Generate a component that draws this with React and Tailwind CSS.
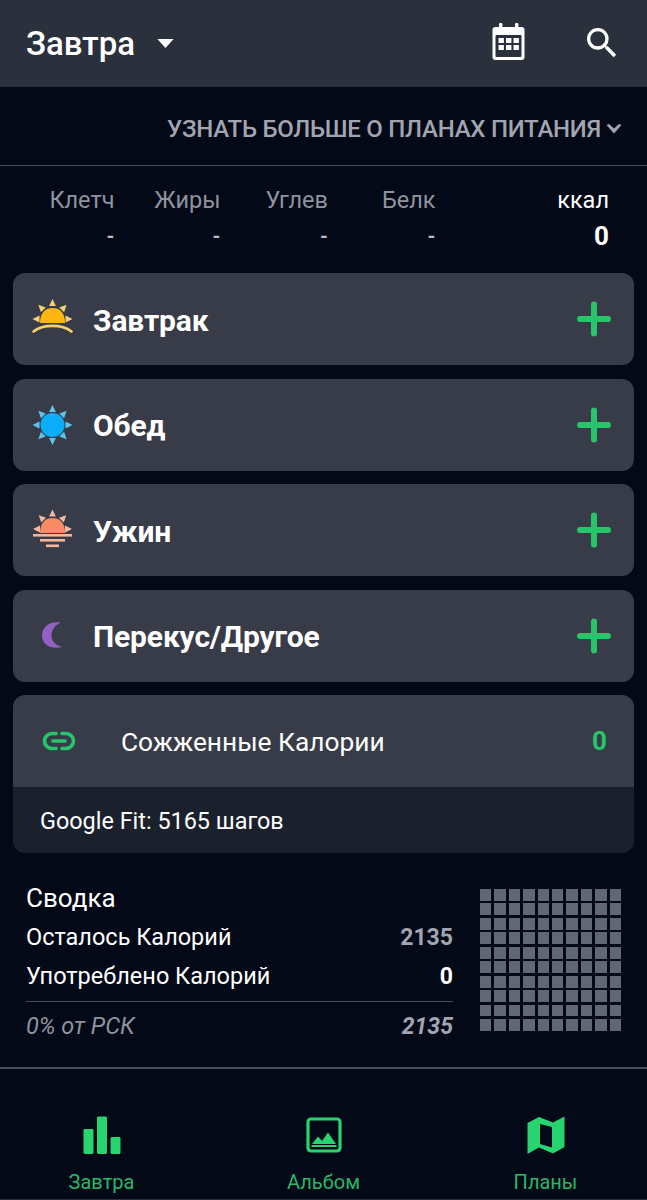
import React from 'react';

const Rays = ({ color, cx = 21, cy = 21, r = 19, angles }) => (
  <>
    {angles.map((a) => (
      <polygon
        key={a}
        points={`${cx - 3.4},${cy - r + 6} ${cx},${cy - r - 1} ${cx + 3.4},${cy - r + 6}`}
        fill={color}
        transform={`rotate(${a} ${cx} ${cy})`}
      />
    ))}
  </>
);

const BreakfastIcon = () => (
  <svg width="42" height="42" viewBox="0 0 42 42">
    <Rays color="#f3d27a" cx={20.5} cy={21} r={19} angles={[-90, -45, 0, 45, 90]} />
    <path d="M8 25 C8 14 14 10 20.5 10 C27 10 33 14 33 25 Z" fill="#ffb70f" />
    <path d="M1.5 33.5 C11 26 30 26 39.5 33.5" fill="none" stroke="#f6cf6c" strokeWidth="2.6" strokeLinecap="round" />
  </svg>
);

const LunchIcon = () => (
  <svg width="42" height="42" viewBox="0 0 42 42">
    <Rays color="#5fc3ea" cx={20.5} cy={21} r={19} angles={[0, 45, 90, 135, 180, 225, 270, 315]} />
    <circle cx="20.5" cy="21" r="12" fill="#0cadf8" />
  </svg>
);

const DinnerIcon = () => (
  <svg width="42" height="42" viewBox="0 0 42 42">
    <Rays color="#f2b9a1" cx={20.5} cy={20} r={18.5} angles={[-90, -45, 45, 90, 0]} />
    <path d="M8 24 C8 13 14 9 20.5 9 C27 9 33 13 33 24 Z" fill="#fb8c62" />
    <rect x="1" y="25" width="39" height="2.6" fill="#f5b59c" />
    <rect x="8" y="30" width="25" height="2.6" fill="#f5b59c" />
    <rect x="14" y="35.5" width="13" height="2.6" fill="#f5b59c" />
  </svg>
);

const SnackIcon = () => (
  <svg width="42" height="42" viewBox="0 0 42 42">
    <path d="M29 7.5 C17 5.5 10 12.5 10 20.5 C10 28.5 17 35 30.5 32 C23 30 19.5 26 19.5 20.5 C19.5 15 23 10 29 7.5 Z" fill="#9361c4" />
  </svg>
);

const Plus = () => (
  <svg width="34" height="36" viewBox="0 0 34 36" className="block">
    <path d="M17 3.5 V32.5 M3 18 H31" stroke="#27c66b" strokeWidth="6" strokeLinecap="round" />
  </svg>
);

const MealCard = ({ icon, label }) => (
  <div className="h-[92px] rounded-xl bg-[#383c48] flex items-center pl-[19px] pr-[23px]">
    <div className="w-[42px] h-[42px] shrink-0">{icon}</div>
    <span className="ml-[19px] pt-[3px] text-[30px] tracking-[-0.15px] font-bold text-white leading-none flex-1">{label}</span>
    <Plus />
  </div>
);

const MacroCol = ({ label, width }) => (
  <div className={`${width} flex flex-col items-end`}>
    <span className="text-[23.5px] leading-[28px] text-[#8f939e]">{label}</span>
    <span className="text-[20px] leading-[28px] mt-[8px] text-[#b9bcc5] font-bold">-</span>
  </div>
);

const SummaryRow = ({ label, value, valueClass }) => (
  <div className="flex items-center justify-between h-[39px] pt-[2px]">
    <span className="text-[23.5px] text-white leading-none">{label}</span>
    <span className={`text-[23px] font-bold leading-none ${valueClass}`}>{value}</span>
  </div>
);

const NavItem = ({ icon, label }) => (
  <div className="flex flex-col items-center w-[200px]">
    <div className="h-[38px] flex items-center">{icon}</div>
    <span className="mt-[16px] text-[20px] leading-[24px] text-[#27b768]">{label}</span>
  </div>
);

export default function App() {
  return (
    <div className="w-[647px] h-[1200px] overflow-hidden bg-[#030916] flex flex-col font-['Roboto',sans-serif]">
      {/* Header */}
      <div className="h-[87px] bg-[#2a313d] flex items-center pl-[26px] pr-[30px] shrink-0">
        <span className="text-[33px] text-white font-medium leading-none">Завтра</span>
        <svg width="17" height="9" viewBox="0 0 18 10" className="ml-[22px]">
          <path d="M0 0 H18 L9 10 Z" fill="#fff" />
        </svg>
        <div className="flex-1" />
        <svg width="36" height="40" viewBox="0 0 36 40" className="mr-[60px] mb-[3px]">
          <rect x="1.5" y="5" width="32" height="33" rx="3" fill="#fff" />
          <rect x="8" y="1" width="3.4" height="7" rx="1.2" fill="#fff" />
          <rect x="24" y="1" width="3.4" height="7" rx="1.2" fill="#fff" />
          <rect x="4.5" y="13" width="26" height="22" rx="1" fill="#2a313d" />
          {[7.5, 15, 22.5].map((x) =>
            [16, 23].map((y) => <rect key={`${x}-${y}`} x={x} y={y} width="5.4" height="5" fill="#fff" />)
          )}
        </svg>
        <svg width="30" height="30" viewBox="3 3 18 18" fill="#fff" className="mb-[2px]">
          <path d="M15.5 14h-.79l-.28-.27A6.471 6.471 0 0 0 16 9.5 6.5 6.5 0 1 0 9.5 16c1.61 0 3.09-.59 4.23-1.57l.27.28v.79l5 4.99L20.49 19l-4.99-5zm-6 0C7.01 14 5 11.99 5 9.5S7.01 5 9.5 5 14 7.01 14 9.5 11.99 14 9.5 14z" />
        </svg>
      </div>

      {/* Plans link */}
      <div className="h-[79px] shrink-0 border-b border-[#4a4f5b] flex items-center justify-end pt-[6px] pr-[25px]">
        <span className="text-[24px] tracking-[-0.25px] font-medium text-[#a2a5b0] leading-none">УЗНАТЬ БОЛЬШЕ О ПЛАНАХ ПИТАНИЯ</span>
        <svg width="16" height="10" viewBox="0 0 16 10" className="ml-[5px]">
          <path d="M0.5 1 L3 0 L8 4.5 L13 0 L15.5 1 L8 9.5 Z" fill="#a2a5b0" />
        </svg>
      </div>

      {/* Macros */}
      <div className="h-[107px] shrink-0 flex items-start pt-[20px] pr-[38px]">
        <MacroCol label="Клетч" width="w-[114.5px]" />
        <MacroCol label="Жиры" width="w-[106px]" />
        <MacroCol label="Углев" width="w-[107.5px]" />
        <MacroCol label="Белк" width="w-[107.5px]" />
        <div className="flex-1 flex flex-col items-end">
          <span className="text-[23.5px] leading-[28px] text-white">ккал</span>
          <span className="text-[26px] leading-[28px] mt-[8px] text-white font-bold">0</span>
        </div>
      </div>

      {/* Meals */}
      <div className="px-[13px] flex flex-col gap-[13.5px] shrink-0">
        <MealCard icon={<BreakfastIcon />} label="Завтрак" />
        <MealCard icon={<LunchIcon />} label="Обед" />
        <MealCard icon={<DinnerIcon />} label="Ужин" />
        <MealCard icon={<SnackIcon />} label="Перекус/Другое" />
        <div className="rounded-xl overflow-hidden">
          <div className="h-[92px] bg-[#383c48] flex items-center pl-[29px] pr-[27px]">
            <svg width="34" height="20" viewBox="0 0 34 20" fill="none" stroke="#27c66b" strokeWidth="3.6" strokeLinecap="round">
              <path d="M14 2.5 H10 a7.5 7.5 0 0 0 0 15 H14" />
              <path d="M20 2.5 H24 a7.5 7.5 0 0 1 0 15 H20" />
              <path d="M11 10 H23" />
            </svg>
            <span className="ml-[45px] pt-[2px] text-[26.3px] text-white leading-none flex-1">Сожженные Калории</span>
            <span className="text-[26px] font-bold text-[#27c66b] leading-none">0</span>
          </div>
          <div className="h-[66px] bg-[#1b212c] flex items-center pl-[27px] pt-[3px]">
            <span className="text-[23.4px] text-white leading-none">Google Fit: 5165 шагов</span>
          </div>
        </div>
      </div>

      {/* Summary */}
      <div className="flex-1 flex items-start pl-[26px] pt-[30px] pr-[26px]">
        <div className="w-[427px]">
          <div className="text-[26px] leading-[30px] text-white">Сводка</div>
          <div className="mt-[4px]">
            <SummaryRow label="Осталось Калорий" value="2135" valueClass="text-[#a2a5b0]" />
            <SummaryRow label="Употреблено Калорий" value="0" valueClass="text-white" />
          </div>
          <div className="mt-[6px] border-t border-[#4a4f5b] h-[48px] pt-[2px] flex items-center justify-between">
            <span className="text-[23.5px] italic text-[#8f939e] leading-none">0% от РСК</span>
            <span className="text-[23px] italic font-bold text-[#a2a5b0] leading-none">2135</span>
          </div>
        </div>
        <div className="ml-[27px] mt-[6px] grid grid-cols-10 gap-[2.9px]">
          {Array.from({ length: 100 }).map((_, i) => (
            <div key={i} className="w-[11.5px] h-[11.6px] bg-[#636773]" />
          ))}
        </div>
      </div>

      {/* Bottom nav */}
      <div className="h-[133px] shrink-0 border-t-2 border-[#4a4f5b] flex justify-center gap-[22px] pt-[47px] border-b border-b-[#2a2f3a]">
        <NavItem
          label="Завтра"
          icon={
            <svg width="38" height="38" viewBox="0 0 38 38" fill="#27d46f">
              <rect x="0.5" y="13" width="10" height="25" rx="1.4" />
              <rect x="14" y="0.5" width="10" height="37.5" rx="1.4" />
              <rect x="27.5" y="21" width="10" height="17" rx="1.4" />
            </svg>
          }
        />
        <NavItem
          label="Альбом"
          icon={
            <svg width="36" height="36" viewBox="0 0 36 36">
              <rect x="2" y="2" width="32" height="32" rx="3" fill="none" stroke="#27d46f" strokeWidth="3.2" />
              <path d="M6 27 L12 19.5 L16 24 L22 15.5 L30 27 Z" fill="#27d46f" />
              <rect x="5.5" y="28" width="25" height="2" fill="#27d46f" />
            </svg>
          }
        />
        <NavItem
          label="Планы"
          icon={
            <svg width="38" height="38" viewBox="0 0 38 38">
              <path d="M0.5 7 L12 1 L26 6.5 L37.5 0.5 V31 L26 37.5 L12 31.5 L0.5 38 Z M13 8 V28 L25 31.5 V11 Z" fill="#27d46f" fillRule="evenodd" />
            </svg>
          }
        />
      </div>
    </div>
  );
}
